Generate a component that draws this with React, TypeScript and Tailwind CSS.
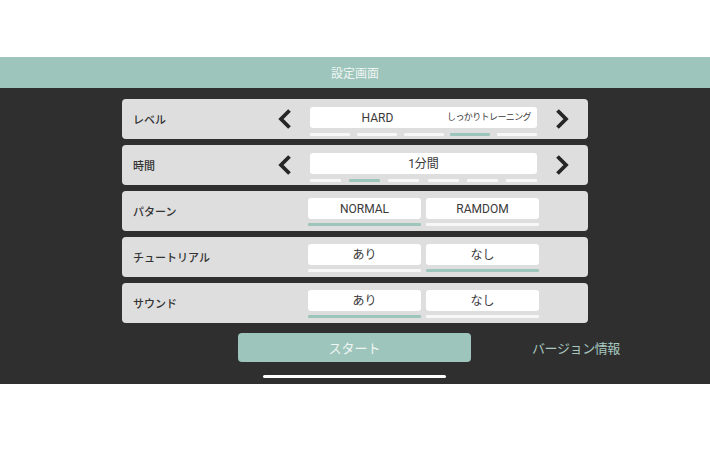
import React from 'react'

const font = { fontFamily: 'Roboto, "Noto Sans CJK JP", "Noto Sans", sans-serif' }

function Chevron({ dir }: { dir: 'left' | 'right' }) {
  return (
    <svg width="24" height="24" viewBox="0 0 24 24" className="shrink-0">
      <path
        d={dir === 'left' ? 'M16.5 3.5 L8 12 L16.5 20.5' : 'M7.5 3.5 L16 12 L7.5 20.5'}
        fill="none"
        stroke="#262626"
        strokeWidth="3.8"
        strokeLinejoin="miter"
      />
    </svg>
  )
}

function Card({ children }: { children: React.ReactNode }) {
  return <div className="h-[40px] rounded-[4px] bg-[#dedede] flex items-start">{children}</div>
}

function Label({ text, w }: { text: string; w: string }) {
  return (
    <div
      className={`${w} shrink-0 h-[40px] flex items-center pl-[11px] text-[11px] text-[#333] font-medium font-['Noto_Sans_CJK_JP',sans-serif]`}
    >
      {text}
    </div>
  )
}

function Stepper({
  label,
  value,
  desc,
  count,
  active,
}: {
  label: string
  value: string
  desc?: string
  count: number
  active: number
}) {
  return (
    <Card>
      <Label text={label} w="w-[151px]" />
      <div className="h-[40px] flex items-center">
        <Chevron dir="left" />
      </div>
      <div className="ml-[13px] w-[227px] pt-[8px] flex flex-col">
        <div className="h-[21px] bg-white rounded-[3px] flex items-center text-[#3a3a3a]">
          {desc ? (
            <>
              <div className="w-[135px] text-center text-[12px]">{value}</div>
              <div className="flex-1 text-right pr-[6px] text-[9px] tracking-[-0.6px] whitespace-nowrap">{desc}</div>
            </>
          ) : (
            <div className="flex-1 text-center text-[12px]">{value}</div>
          )}
        </div>
        <div className="mt-[5px] flex justify-between">
          {Array.from({ length: count }).map((_, i) => (
            <div
              key={i}
              className={`h-[3px] rounded-[1px] ${count === 5 ? 'w-[40px]' : 'w-[31px]'} ${
                i === active ? 'bg-[#9ec5bb]' : 'bg-[#f7f7f7]'
              }`}
            />
          ))}
        </div>
      </div>
      <div className="ml-[13px] h-[40px] flex items-center">
        <Chevron dir="right" />
      </div>
    </Card>
  )
}

function Choice({ label, options, active }: { label: string; options: string[]; active: number }) {
  return (
    <Card>
      <Label text={label} w="w-[186px]" />
      <div className="pt-[7px] flex gap-[5px]">
        {options.map((o, i) => (
          <div key={o} className="w-[113px] flex flex-col">
            <div className="h-[21px] bg-white rounded-[3px] flex items-center justify-center text-[12px] text-[#3a3a3a]">
              {o}
            </div>
            <div className={`mt-[4px] h-[3px] rounded-[1px] ${i === active ? 'bg-[#9ec5bb]' : 'bg-[#f7f7f7]'}`} />
          </div>
        ))}
      </div>
    </Card>
  )
}

export default function App() {
  return (
    <div className="w-[710px] h-[456px] bg-white flex flex-col" style={font}>
      <div className="h-[57px]" />
      <div className="h-[31px] bg-[#9ec5bb] flex items-center justify-center text-[12px] text-[#eef5f3] font-['Noto_Sans_CJK_JP',sans-serif]">
        設定画面
      </div>
      <div className="h-[296px] bg-[#2f2f2f] flex flex-col pt-[11px]">
        <div className="ml-[122px] w-[466px] flex flex-col gap-[6px]">
          <Stepper label="レベル" value="HARD" desc="しっかりトレーニング" count={5} active={3} />
          <Stepper label="時間" value="1分間" count={6} active={1} />
          <Choice label="パターン" options={['NORMAL', 'RAMDOM']} active={0} />
          <Choice label="チュートリアル" options={['あり', 'なし']} active={1} />
          <Choice label="サウンド" options={['あり', 'なし']} active={0} />
        </div>
        <div className="mt-[10px] flex items-center font-['Noto_Sans_CJK_JP',sans-serif]">
          <div className="ml-[238px] w-[233px] h-[29px] rounded-[4px] bg-[#9ec5bb] flex items-center justify-center text-[13px] text-[#eef5f3]">
            スタート
          </div>
          <div className="ml-[61px] text-[13px] tracking-[-0.4px] text-[#a8c8c0]">バージョン情報</div>
        </div>
        <div className="mt-[13px] ml-[263px] w-[183px] h-[3px] rounded-full bg-white" />
      </div>
    </div>
  )
}
